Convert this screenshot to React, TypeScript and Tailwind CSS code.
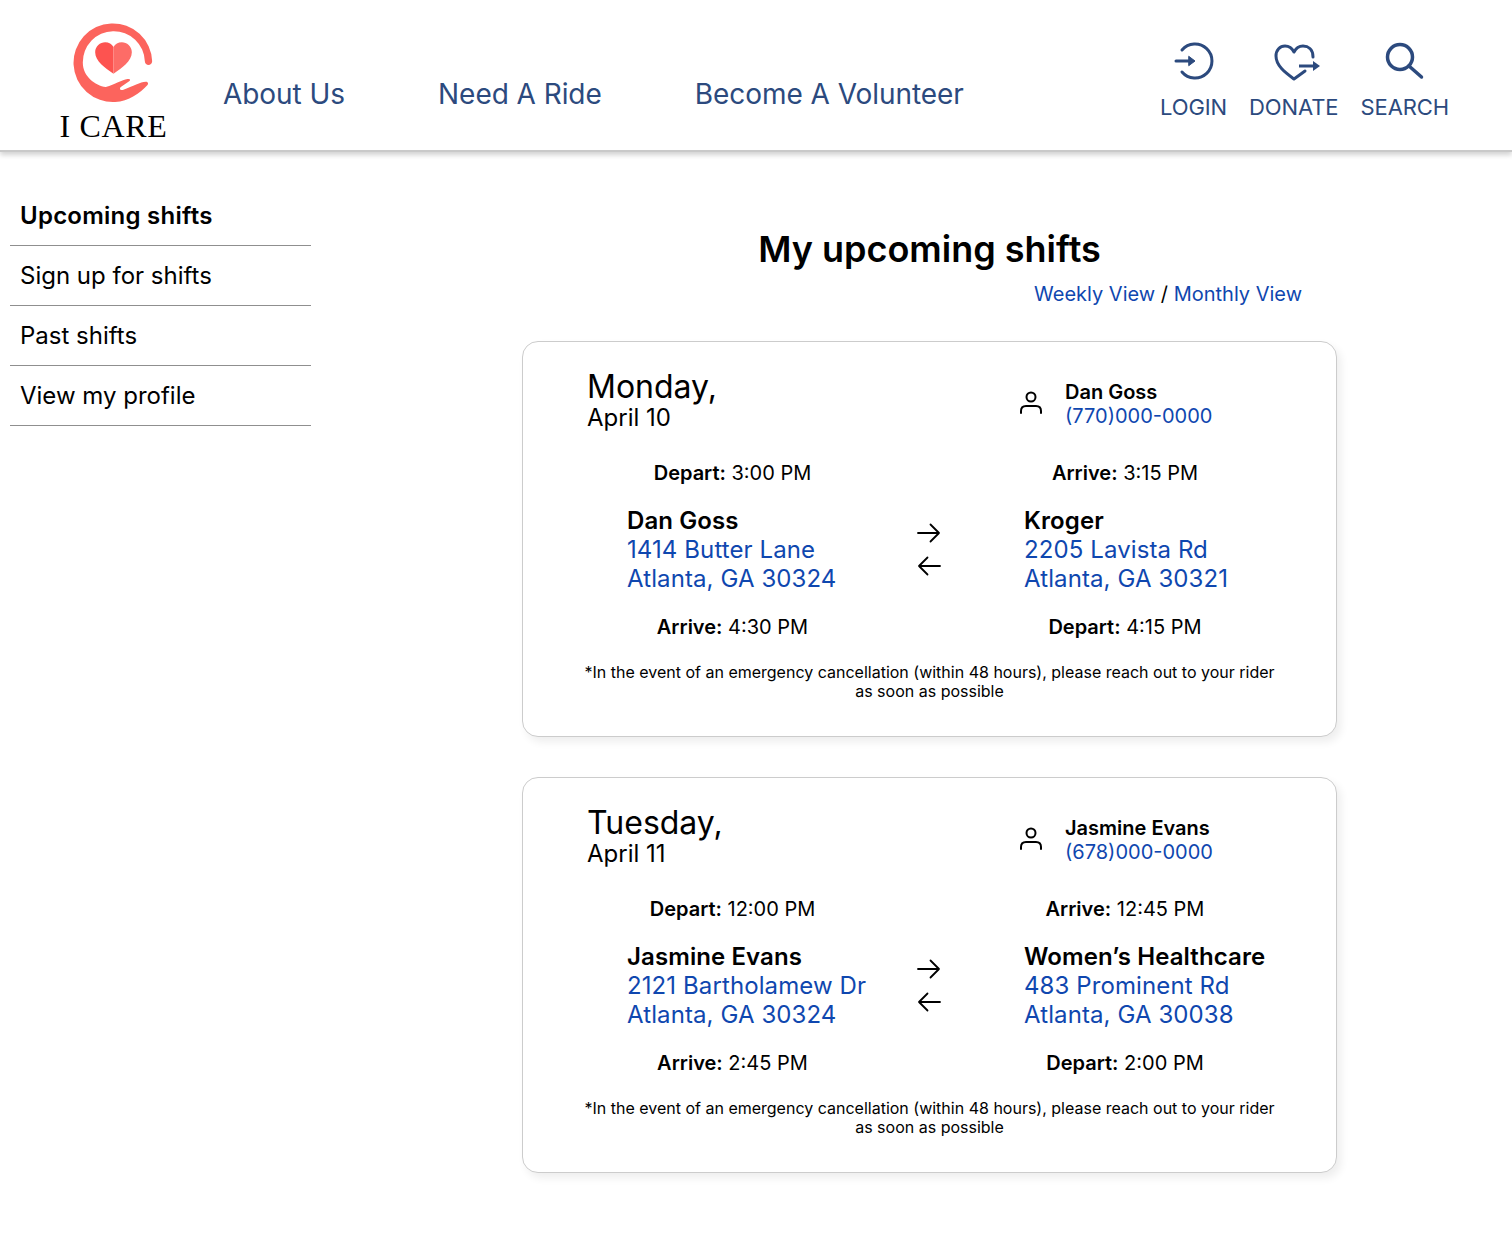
const font = { fontFamily: "Inter, 'Liberation Sans', sans-serif" };

function Logo() {
  return (
    <svg width="87" height="80" viewBox="90 40 260 240" fill="none">
      <path
        d="M336 155 A118 118 0 1 0 225 277 C265 275 300 250 322 226 C326 220 322 216 317 216 C300 217 280 228 248 241 C241 243 236 236 242 232 C250 226 260 220 268 214 C272 210 268 207 262 208 C245 210 225 225 197 232 C165 228 128 200 128 160 A93 93 0 0 1 314 155 C315 170 335 170 336 155 Z"
        fill="#FC645D"
      />
      <path d="M220 192 C195 175 165 155 165 128 C165 110 180 98 195 98 C206 98 215 104 220 112 Z" fill="#FD5350" />
      <path d="M220 192 C245 175 275 155 275 128 C275 110 260 98 245 98 C234 98 225 104 220 112 Z" fill="#FD6C67" />
    </svg>
  );
}

function LoginIcon() {
  return (
    <svg width="42" height="42" viewBox="0 0 42 42" fill="none" stroke="#2C4A7E" strokeWidth="3" strokeLinecap="round">
      <path d="M9 10 A17 17 0 1 1 9 32" />
      <path d="M3 21 H19" />
      <path d="M16 16.500 L22 21 L16 25.500 Z" fill="#2C4A7E" strokeWidth="1" strokeLinejoin="round" />
    </svg>
  );
}

function DonateIcon() {
  return (
    <svg width="50" height="42" viewBox="0 0 50 42" fill="none" stroke="#2C4A7E" strokeWidth="3" strokeLinecap="round" strokeLinejoin="round">
      <path d="M40 17 C40 9 35 6 30 6 C26 6 23 8 21 12 C19 8 16 6 12 6 C7 6 3 10 3 16 C3 26 13 33 21 39 L32 31" />
      <path d="M26 26 H41" strokeLinecap="butt" />
      <path d="M40 21 L47 26 L40 31 Z" fill="#2C4A7E" stroke="none" />
    </svg>
  );
}

function SearchIcon() {
  return (
    <svg width="42" height="42" viewBox="0 0 42 42" fill="none" stroke="#2C4A7E" strokeWidth="3.500" strokeLinecap="round">
      <circle cx="16" cy="17" r="12.500" />
      <path d="M25 26 L37.500 37" />
    </svg>
  );
}

function PersonIcon() {
  return (
    <svg width="24" height="28" viewBox="0 0 24 28" fill="none" stroke="#000" strokeWidth="2" strokeLinecap="round">
      <circle cx="12" cy="7" r="4.500" />
      <path d="M2 23 V21 C2 18 4 16 7 16 H17 C20 16 22 18 22 21 V23" />
    </svg>
  );
}

function Arrows() {
  return (
    <div className="flex flex-col items-center gap-[13px] pt-[4px] mr-[1px]">
      <svg width="24" height="20" viewBox="0 0 24 20" fill="none" stroke="#000" strokeWidth="1.800" strokeLinecap="round" strokeLinejoin="round">
        <path d="M1 10 H22 M13.500 1.500 L22 10 L13.500 18.500" />
      </svg>
      <svg width="24" height="20" viewBox="0 0 24 20" fill="none" stroke="#000" strokeWidth="1.800" strokeLinecap="round" strokeLinejoin="round">
        <path d="M23 10 H2 M10.500 1.500 L2 10 L10.500 18.500" />
      </svg>
    </div>
  );
}

type Shift = {
  day: string;
  date: string;
  contact: string;
  phone: string;
  depart: string;
  arrive: string;
  fromName: string;
  fromA: string;
  fromB: string;
  toName: string;
  toA: string;
  toB: string;
  backArrive: string;
  backDepart: string;
};

const shifts: Shift[] = [
  {
    day: "Monday,", date: "April 10", contact: "Dan Goss", phone: "(770)000-0000",
    depart: "3:00 PM", arrive: "3:15 PM",
    fromName: "Dan Goss", fromA: "1414 Butter Lane", fromB: "Atlanta, GA 30324",
    toName: "Kroger", toA: "2205 Lavista Rd", toB: "Atlanta, GA 30321",
    backArrive: "4:30 PM", backDepart: "4:15 PM",
  },
  {
    day: "Tuesday,", date: "April 11", contact: "Jasmine Evans", phone: "(678)000-0000",
    depart: "12:00 PM", arrive: "12:45 PM",
    fromName: "Jasmine Evans", fromA: "2121 Bartholamew Dr", fromB: "Atlanta, GA 30324",
    toName: "Women’s Healthcare", toA: "483 Prominent Rd", toB: "Atlanta, GA 30038",
    backArrive: "2:45 PM", backDepart: "2:00 PM",
  },
];

function Time({ label, value }: { label: string; value: string }) {
  return (
    <p className="text-center text-[20px] leading-[24px] text-black">
      <span className="font-semibold">{label}</span> {value}
    </p>
  );
}

function Place({ name, a, b, pad }: { name: string; a: string; b: string; pad: string }) {
  return (
    <div className={`${pad} text-[24px] leading-[29px] tracking-[0.1px] whitespace-nowrap`}>
      <p className="font-semibold text-black tracking-[0.1px]">{name}</p>
      <p className="text-[#0F47AF]">{a}</p>
      <p className="text-[#0F47AF]">{b}</p>
    </div>
  );
}

function Card({ s }: { s: Shift }) {
  return (
    <section className="w-[815px] h-[396px] rounded-[16px] border border-[#cccccc] bg-white shadow-[4px_5px_8px_rgba(0,0,0,0.07)] pt-[25px]">
      <div className="flex pl-[63px]">
        <div className="w-[433px] text-black">
          <p className="text-[32px] leading-[39px] pl-[1px]">{s.day}</p>
          <p className="text-[24px] leading-[24px] pl-[1px]">{s.date}</p>
        </div>
        <div className="flex items-center gap-[22px] h-[60px] mt-[7px]">
          <PersonIcon />
          <div>
            <p className="text-[20px] leading-[24px] font-semibold text-black">{s.contact}</p>
            <p className="text-[20px] leading-[24px] text-[#0F47AF]">{s.phone}</p>
          </div>
        </div>
      </div>
      <div className="grid grid-cols-[293px_101px_290px] pl-[63px] mt-[27px]">
        <Time label="Depart:" value={s.depart} />
        <div />
        <Time label="Arrive:" value={s.arrive} />
        <div className="mt-[21px]"><Place name={s.fromName} a={s.fromA} b={s.fromB} pad="pl-[41px]" /></div>
        <div className="mt-[21px] flex justify-center pt-[13px]"><Arrows /></div>
        <div className="mt-[21px]"><Place name={s.toName} a={s.toA} b={s.toB} pad="pl-[44px]" /></div>
        <div className="mt-[22px]"><Time label="Arrive:" value={s.backArrive} /></div>
        <div />
        <div className="mt-[22px]"><Time label="Depart:" value={s.backDepart} /></div>
      </div>
      <p className="mx-auto mt-[24px] w-[700px] text-center text-[16px] leading-[19px] text-black">
        *In the event of an emergency cancellation (within 48 hours), please reach out to your rider as soon as possible
      </p>
    </section>
  );
}

export default function App() {
  const side = ["Upcoming shifts", "Sign up for shifts", "Past shifts", "View my profile"];
  return (
    <div className="min-h-[1233px] bg-white" style={font}>
      <header className="h-[152px] flex border-b-2 border-[#c9c9c9] shadow-[0_3px_5px_rgba(0,0,0,0.18)] text-[#2C4A7E]">
        <div className="ml-[60px] w-[107px] flex flex-col items-center">
          <div className="mt-[23px] h-[85px]"><Logo /></div>
          <span className="text-[32px] leading-[36px] tracking-[0.7px] text-black whitespace-nowrap" style={{ fontFamily: "'Liberation Serif', serif" }}>I CARE</span>
        </div>
        <nav className="ml-[56px] mt-[77px] flex gap-[93px] text-[28px] leading-[34px] tracking-[-0.05px] whitespace-nowrap">
          <a>About Us</a>
          <a>Need A Ride</a>
          <a>Become A Volunteer</a>
        </nav>
        <div className="ml-auto mr-[63px] mt-[40px] flex gap-[22px] text-[22px] leading-[27px] tracking-[-0.1px]">
          <div className="flex flex-col items-center"><div className="h-[42px] mb-[12px]"><LoginIcon /></div>LOGIN</div>
          <div className="flex flex-col items-center"><div className="h-[42px] mb-[12px] ml-[8px]"><DonateIcon /></div>DONATE</div>
          <div className="flex flex-col items-center"><div className="h-[42px] mb-[12px]"><SearchIcon /></div>SEARCH</div>
        </div>
      </header>
      <div className="flex">
        <aside className="ml-[10px] mt-[34px] w-[301px] shrink-0">
          {side.map((t, i) => (
            <div key={t} className={`h-[60px] border-b border-[#8f8f8f] pl-[10px] flex items-center text-[24px] text-black ${i === 0 ? "font-semibold tracking-[0.25px]" : ""}`}>
              {t}
            </div>
          ))}
        </aside>
        <main className="ml-[211px] w-[815px]">
          <h1 className="mt-[75px] text-center text-[36px] leading-[44px] font-semibold text-black">My upcoming shifts</h1>
          <p className="mt-[11px] pr-[35px] text-right text-[20px] leading-[24px] text-black">
            <a className="text-[#0F47AF]">Weekly View</a> / <a className="text-[#0F47AF]">Monthly View</a>
          </p>
          <div className="mt-[35px] flex flex-col gap-[40px]">
            {shifts.map((s) => <Card key={s.day} s={s} />)}
          </div>
        </main>
      </div>
    </div>
  );
}
